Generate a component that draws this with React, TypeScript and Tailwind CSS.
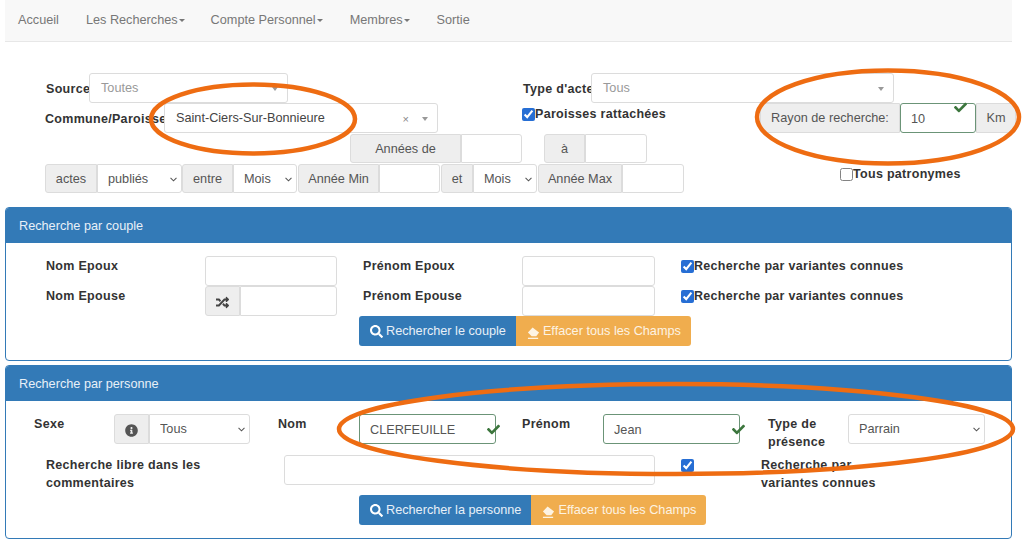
import React from "react";
import { FaCheck, FaInfoCircle, FaRandom, FaSearch } from "react-icons/fa";

const sans = "font-['Liberation_Sans',Arial,sans-serif]";
const bold = "font-bold text-[12.5px] leading-[18px] text-[#333] tracking-[0.3px] whitespace-nowrap pt-[1px]";
const wrapBold = "font-bold text-[12.5px] leading-[18px] text-[#333] tracking-[0.3px] pt-[1px]";

const Eraser = () => (
  <svg viewBox="0 0 14 14" className="w-[13px] h-[13px] fill-current">
    <path d="M1 7 6 1.5l7 5.5-3 4H5z" />
    <path d="M1 12.6h11V14H1z" />
  </svg>
);

const Addon = ({ w, children, className = "" }: { w: number; children: React.ReactNode; className?: string }) => (
  <div
    className={`flex items-center justify-center h-full shrink-0 pt-[2px] bg-[#eee] text-[#555] border border-[#dcdcdc] rounded-[3px] ${className}`}
    style={{ width: w }}
  >
    {children}
  </div>
);

const Box = ({ w, value = "", valid, className = "" }: { w: number; value?: string; valid?: boolean; className?: string }) => (
  <input
    readOnly
    value={value}
    className={`h-full shrink-0 bg-white px-[10px] pt-[1px] text-[#555] border rounded-[3px] outline-none ${valid ? "border-[#6b9477]" : "border-[#dcdcdc]"} ${className}`}
    style={{ width: w }}
  />
);

const Pick = ({ w, value, className = "" }: { w: number; value: string; className?: string }) => (
  <div className="relative h-full shrink-0" style={{ width: w }}>
    <select
      defaultValue={value}
      className={`appearance-none w-full h-full bg-white pl-[10px] pt-[2px] text-[#555] border border-[#dcdcdc] rounded-[3px] outline-none ${className}`}
    >
      <option>{value}</option>
    </select>
    <svg viewBox="0 0 8 5" className="absolute right-[5px] top-[13px] w-[7px] h-[5px] pointer-events-none" fill="none" stroke="#555" strokeWidth="1.2">
      <path d="M.6.7 4 4l3.4-3.3" />
    </svg>
  </div>
);

const Select2 = ({ w, value, clear, muted }: { w: number; value: string; clear?: boolean; muted?: boolean }) => (
  <div className="flex items-center h-full shrink-0 bg-white pl-[11px] pr-[9px] pt-[2px] border border-[#dcdcdc] rounded-[3px]" style={{ width: w }}>
    <span className={`flex-1 ${muted ? "text-[#999]" : "text-[#444]"}`}>{value}</span>
    {clear && <span className="mr-[13px] text-[11px] text-[#888]">×</span>}
    <span className="w-0 h-0 border-x-[3.5px] border-x-transparent border-t-[4px] border-t-[#999]" />
  </div>
);

const Check = ({ checked, label, className = "" }: { checked?: boolean; label?: string; className?: string }) => (
  <label className={`flex items-start ${bold} ${className}`}>
    <input type="checkbox" defaultChecked={checked} className="w-[13px] h-[13px] mt-[3px] mr-0 accent-[#0f5fd0] opacity-90" />
    {label}
  </label>
);

const Tick = ({ className }: { className: string }) => (
  <FaCheck className={`absolute text-[#3c763d] w-[13px] h-[13px] ${className}`} />
);

const Caret = () => <b className="ml-[1px] w-0 h-0 border-x-[3px] border-x-transparent border-t-[3px] border-t-[#777]" />;

const Buttons = ({ search, ml = 353 }: { search: string; ml?: number }) => (
  <div className="flex h-[30px]" style={{ marginLeft: ml }}>
    <div className="flex items-center gap-[3px] pl-[11px] pr-[10px] pt-[2px] bg-[#337ab7] text-[#e8f0f7] rounded-l-[3px]">
      <FaSearch className="w-[13px] h-[13px] text-white -mt-[2px]" />
      {search}
    </div>
    <div className="flex items-center gap-[3px] pl-[11px] pr-[10px] pt-[2px] bg-[#f0ad4e] text-[#fdf3e3] rounded-r-[3px]">
      <Eraser />
      Effacer tous les Champs
    </div>
  </div>
);

const Panel = ({ title, className, children }: { title: string; className: string; children: React.ReactNode }) => (
  <section className={`w-[1007px] ml-[5px] border border-[#337ab7] rounded-[4px] overflow-hidden ${className}`}>
    <div className="flex items-center h-[35px] pl-[13px] pt-[2px] bg-[#337ab7] text-[#e8f0f7]">{title}</div>
    {children}
  </section>
);

const App = () => {
  return (
    <div className={`relative w-[1024px] h-[547px] overflow-hidden bg-white text-[12.7px] ${sans}`}>
      <nav className="flex items-start w-[1007px] ml-[5px] h-[42px] pt-[13px] bg-[#f8f8f8] border-b border-[#e7e7e7] text-[#777] leading-[15px]">
        <span className="ml-[13px]">Accueil</span>
        <span className="ml-[27px] flex items-center">Les Recherches<Caret /></span>
        <span className="ml-[26px] flex items-center">Compte Personnel<Caret /></span>
        <span className="ml-[27px] flex items-center">Membres<Caret /></span>
        <span className="ml-[27px]">Sortie</span>
      </nav>

      <div className="pl-[45px] pt-[31px] h-[165px]">
        <div className="flex items-center h-[30px]">
          <span className={`w-[44px] pl-[1px] ${bold}`}>Source</span>
          <Select2 w={199} value="Toutes" muted />
          <span className={`ml-[235px] w-[68px] ${bold}`}>Type d'acte</span>
          <Select2 w={303} value="Tous" muted />
        </div>
        <div className="flex items-center h-[30px]">
          <span className={`w-[119px] ${bold}`}>Commune/Paroisse</span>
          <Select2 w={274} value="Saint-Ciers-Sur-Bonnieure" clear />
          <Check checked label="Paroisses rattachées" className="ml-[84px] w-[238px] self-start mt-[1px]" />
          <Addon w={140} className="rounded-r-none">Rayon de recherche:</Addon>
          <div className="relative h-full">
            <Box w={76} value="10" valid />
            <Tick className="right-[9px] -top-[2px]" />
          </div>
          <Addon w={40} className="rounded-l-none">Km</Addon>
        </div>
        <div className="flex h-[30px] pl-[305px] pt-[1px]">
          <Addon w={111} className="rounded-r-none">Années de</Addon>
          <Box w={61} className="rounded-l-none" />
          <Addon w={41} className="ml-[22px] rounded-r-none">à</Addon>
          <Box w={62} className="rounded-l-none" />
        </div>
        <div className="flex h-[30px] pt-[1px]">
          <Addon w={52} className="rounded-r-none">actes</Addon>
          <Pick w={85} value="publiés" className="rounded-l-none" />
          <Addon w={51} className="rounded-r-none">entre</Addon>
          <Pick w={64} value="Mois" className="rounded-l-none" />
          <Addon w={81} className="ml-[1px] rounded-r-none">Année Min</Addon>
          <Box w={61} className="rounded-l-none" />
          <Addon w={32} className="ml-[1px] rounded-r-none">et</Addon>
          <Pick w={64} value="Mois" className="rounded-l-none" />
          <Addon w={84} className="ml-[1px] rounded-r-none">Année Max</Addon>
          <Box w={62} className="rounded-l-none" />
          <Check label="Tous patronymes" className="ml-[156px] h-[18px]" />
        </div>
      </div>

      <Panel title="Recherche par couple" className="h-[154px]">
        <div className="pt-[13px] pl-[40px]">
          <div className="flex h-[30px]">
            <span className={`w-[159px] ${bold}`}>Nom Epoux</span>
            <Box w={132} />
            <span className={`ml-[26px] w-[159px] ${bold}`}>Prénom Epoux</span>
            <Box w={133} />
            <Check checked label="Recherche par variantes connues" className="ml-[26px]" />
          </div>
          <div className="flex h-[30px]">
            <span className={`w-[159px] ${bold}`}>Nom Epouse</span>
            <Addon w={35} className="rounded-r-none"><FaRandom className="w-[13px] h-[13px] text-[#444]" /></Addon>
            <Box w={97} className="rounded-l-none" />
            <span className={`ml-[26px] w-[159px] ${bold}`}>Prénom Epouse</span>
            <Box w={133} />
            <Check checked label="Recherche par variantes connues" className="ml-[26px]" />
          </div>
          <Buttons search="Rechercher le couple" ml={313} />
        </div>
      </Panel>

      <Panel title="Recherche par personne" className="mt-[4px] h-[174px]">
        <div className="pt-[13px]">
          <div className="flex h-[30px] pl-[28px]">
            <span className={`w-[80px] ${bold}`}>Sexe</span>
            <Addon w={35} className="rounded-r-none"><FaInfoCircle className="w-[13px] h-[13px] text-[#555]" /></Addon>
            <Pick w={101} value="Tous" className="rounded-l-none" />
            <span className={`ml-[28px] w-[81px] ${bold}`}>Nom</span>
            <div className="relative h-full">
              <Box w={137} value="CLERFEUILLE" valid />
              <Tick className="-right-[4px] top-[9px]" />
            </div>
            <span className={`ml-[26px] w-[81px] ${bold}`}>Prénom</span>
            <div className="relative h-full">
              <Box w={137} value="Jean" valid />
              <Tick className="-right-[5px] top-[9px]" />
            </div>
            <span className={`ml-[28px] w-[80px] ${wrapBold}`}>Type de présence</span>
            <Pick w={137} value="Parrain" />
          </div>
          <div className="flex h-[30px] mt-[11px] pl-[40px]">
            <span className={`w-[238px] ${wrapBold}`}>Recherche libre dans les commentaires</span>
            <Box w={371} />
            <Check checked className="ml-[26px] w-[80px]" />
            <span className={`w-[150px] ${wrapBold}`}>Recherche par variantes connues</span>
          </div>
          <div className="mt-[10px]">
            <Buttons search="Rechercher la personne" />
          </div>
        </div>
      </Panel>

      {/* annotations drawn over the page */}
      <svg className="absolute inset-0 pointer-events-none" width="1024" height="547" fill="none" stroke="#ee6c12" strokeWidth="4.5">
        <ellipse cx="253" cy="119" rx="102" ry="34.5" />
        <ellipse cx="888" cy="117" rx="131" ry="46.5" />
        <ellipse cx="676" cy="429" rx="337" ry="45" />
      </svg>
    </div>
  );
};

export default App;
